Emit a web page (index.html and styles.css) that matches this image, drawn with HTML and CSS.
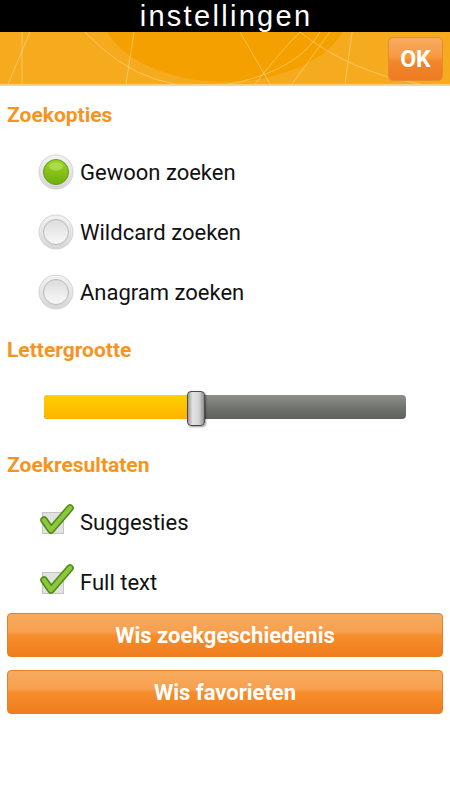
FILE: index.html
```html
<!DOCTYPE HTML>
<html>
  <head>
    <meta http-equiv="content-type" content="text/html; charset=utf-8">
    <title>instellingen</title>
    <link rel="stylesheet" href="styles.css">
  </head>
  <body>

    <div class="titleBar">instellingen</div>

    <div class="banner">
      <svg class="bannerArt" width="450" height="52" viewBox="0 0 450 52">
        <ellipse cx="225" cy="-25" rx="125" ry="75" fill="#f3a000"/>
        <g fill="none" stroke="#ffe9b8" stroke-opacity="0.45" stroke-width="1">
          <path d="M85 0 Q150 70 240 50 Q300 35 320 0"/>
          <path d="M8 52 L30 0"/>
          <path d="M22 0 L22 52"/>
          <path d="M126 52 L134 0"/>
          <path d="M240 0 L270 52"/>
          <path d="M330 0 L292 52"/>
          <path d="M255 52 Q280 20 300 0"/>
          <path d="M300 0 Q350 40 420 52"/>
          <path d="M345 52 L352 0"/>
        </g>
      </svg>
      <div class="okButton">OK</div>
    </div>

    <div class="content">
      <div class="sectionTitle firstTitle">Zoekopties</div>

      <div class="optionRow">
        <svg class="radio" width="36" height="36" viewBox="0 0 36 36">
          <circle cx="18" cy="18" r="17" fill="url(#ringGrad)" stroke="#d4d4d4"/>
          <circle cx="18" cy="18" r="12.5" fill="url(#greenGrad)" stroke="#6a9a12"/>
          <ellipse cx="18" cy="12.5" rx="7" ry="4" fill="#c8ec7a" opacity="0.5"/>
        </svg>
        <span class="optionText">Gewoon zoeken</span>
      </div>

      <div class="optionRow">
        <svg class="radio" width="36" height="36" viewBox="0 0 36 36">
          <circle cx="18" cy="18" r="17" fill="url(#ringGrad)" stroke="#d4d4d4"/>
          <circle cx="18" cy="18" r="12.5" fill="url(#greyGrad)" stroke="#b8b8b8"/>
        </svg>
        <span class="optionText">Wildcard zoeken</span>
      </div>

      <div class="optionRow">
        <svg class="radio" width="36" height="36" viewBox="0 0 36 36">
          <circle cx="18" cy="18" r="17" fill="url(#ringGrad)" stroke="#d4d4d4"/>
          <circle cx="18" cy="18" r="12.5" fill="url(#greyGrad)" stroke="#b8b8b8"/>
        </svg>
        <span class="optionText">Anagram zoeken</span>
      </div>

      <div class="sectionTitle">Lettergrootte</div>

      <div class="sliderRow">
        <div class="sliderTrack">
          <div class="sliderFill" style="width: 144px"></div>
          <div class="sliderThumb" style="left: 143px"></div>
        </div>
      </div>

      <div class="sectionTitle">Zoekresultaten</div>

      <div class="optionRow">
        <svg class="check" width="38" height="36" viewBox="0 0 38 36">
          <rect x="4.5" y="8.5" width="21" height="21" fill="#e2e2e2" stroke="#c4c4c4"/>
          <path d="M6 16 L13 26 L32 4" fill="none" stroke="#4d8a10" stroke-width="7.5" stroke-linecap="round" stroke-linejoin="round"/>
          <path d="M6 16 L13 26 L32 4" fill="none" stroke="#8cc63f" stroke-width="4.5" stroke-linecap="round" stroke-linejoin="round"/>
        </svg>
        <span class="optionText">Suggesties</span>
      </div>

      <div class="optionRow">
        <svg class="check" width="38" height="36" viewBox="0 0 38 36">
          <rect x="4.5" y="8.5" width="21" height="21" fill="#e2e2e2" stroke="#c4c4c4"/>
          <path d="M6 16 L13 26 L32 4" fill="none" stroke="#4d8a10" stroke-width="7.5" stroke-linecap="round" stroke-linejoin="round"/>
          <path d="M6 16 L13 26 L32 4" fill="none" stroke="#8cc63f" stroke-width="4.5" stroke-linecap="round" stroke-linejoin="round"/>
        </svg>
        <span class="optionText">Full text</span>
      </div>

      <div class="bigButton firstButton">Wis zoekgeschiedenis</div>
      <div class="bigButton">Wis favorieten</div>
    </div>

    <svg width="0" height="0" class="defs">
      <defs>
        <linearGradient id="ringGrad" x1="0" y1="0" x2="0" y2="1">
          <stop offset="0" stop-color="#f4f4f4"/>
          <stop offset="1" stop-color="#d6d6d6"/>
        </linearGradient>
        <linearGradient id="greenGrad" x1="0" y1="0" x2="0" y2="1">
          <stop offset="0" stop-color="#9ed426"/>
          <stop offset="1" stop-color="#6fae0c"/>
        </linearGradient>
        <linearGradient id="greyGrad" x1="0" y1="0" x2="0" y2="1">
          <stop offset="0" stop-color="#dcdcdc"/>
          <stop offset="1" stop-color="#f9f9f9"/>
        </linearGradient>
      </defs>
    </svg>

  </body>
</html>
```

FILE: styles.css
```css
body {
  margin: 0;
  background-color: #fff;
  font-family: Roboto, "Liberation Sans", sans-serif;
}

.titleBar {
  height: 32px;
  line-height: 33px;
  background-color: #000;
  color: #fff;
  text-align: center;
  font-family: "Liberation Sans", Arial, sans-serif;
  font-size: 29px;
  letter-spacing: 2.3px;
  padding-left: 2px;
}

.banner {
  position: relative;
  background-color: #f6aa1e;
  border-bottom: 2px solid #fbcf86;
  display: flex;
  justify-content: flex-end;
  align-items: flex-start;
  padding: 5px 7px 0 0;
  height: 47px;
  overflow: hidden;
}

.bannerArt {
  position: absolute;
  left: 0;
  top: 0;
}

.okButton {
  position: relative;
  width: 53px;
  height: 42px;
  line-height: 44px;
  text-align: center;
  color: #fff;
  font-weight: bold;
  font-size: 23px;
  border: 1px solid #e88a33;
  border-radius: 5px;
  background: linear-gradient(to bottom, #f7ac62 0%, #f79a3e 45%, #f28629 55%, #ee7a22 100%);
}

.content {
  padding: 0 7px;
}

.sectionTitle {
  color: #f7941d;
  font-weight: bold;
  font-size: 21px;
  line-height: 28px;
  margin-top: 14px;
}

.firstTitle {
  margin-top: 15px;
}

.optionRow {
  height: 60px;
  display: flex;
  align-items: center;
  padding-left: 31px;
}

.sectionTitle + .optionRow {
  margin-top: 13px;
}

.radio {
  margin-right: 6px;
}

.check {
  margin-right: 4px;
}

.optionText {
  font-size: 22px;
  color: #111;
}

.sliderRow {
  height: 60px;
  display: flex;
  align-items: center;
  padding-left: 37px;
  margin-top: 13px;
}

.sliderTrack {
  position: relative;
  width: 362px;
  height: 24px;
  border-radius: 4px;
  background: linear-gradient(to bottom, #8e908c 0%, #6e706c 60%, #5f615d 100%);
}

.sliderFill {
  height: 24px;
  border-radius: 4px 0 0 4px;
  background: linear-gradient(to bottom, #ffd000 0%, #ffbe00 60%, #ffb400 100%);
}

.sliderThumb {
  position: absolute;
  top: -4px;
  width: 16px;
  height: 33px;
  border: 1px solid #4a4a4a;
  border-radius: 4px;
  background: linear-gradient(to right, #9c9c9c 0%, #e4e4e4 30%, #d2d2d2 70%, #8e8e8e 100%);
  box-shadow: 1px 1px 2px rgba(0, 0, 0, 0.4);
}

.bigButton {
  height: 42px;
  line-height: 43px;
  text-align: center;
  color: #fff;
  font-weight: bold;
  font-size: 22px;
  border: 1px solid #e8801f;
  border-radius: 4px;
  background: linear-gradient(to bottom, #f7ab5e 0%, #f7a050 42%, #f68d2a 52%, #ef7c1e 100%);
  margin-top: 13px;
}

.firstButton {
  margin-top: 1px;
}

.defs {
  position: absolute;
}
```
